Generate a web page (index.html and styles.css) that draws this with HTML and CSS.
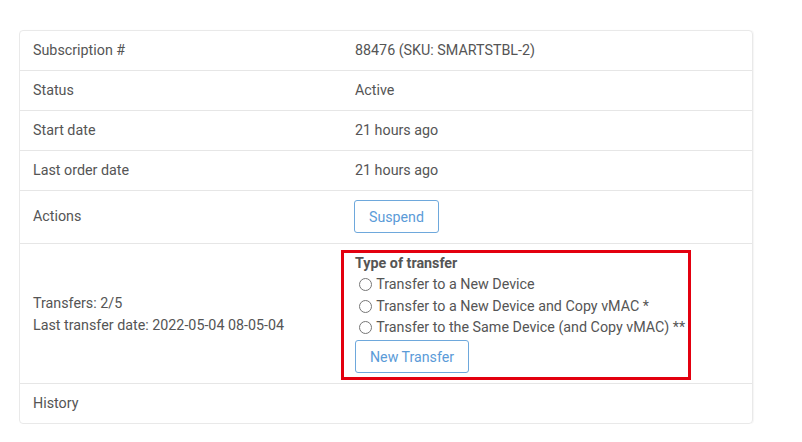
FILE: index.html
```html
<!DOCTYPE html>
<html lang="en">

<head>
    <meta charset="UTF-8">
    <meta name="viewport" content="width=device-width, initial-scale=1">
    <title>Subscription</title>
    <link rel="stylesheet" href="styles.css">
</head>

<body>
<div class="card">
    <table class="details">
        <tr>
            <td class="label">Subscription #</td>
            <td>88476 (SKU: SMARTSTBL-2)</td>
        </tr>
        <tr>
            <td class="label">Status</td>
            <td>Active</td>
        </tr>
        <tr>
            <td class="label">Start date</td>
            <td>21 hours ago</td>
        </tr>
        <tr>
            <td class="label">Last order date</td>
            <td>21 hours ago</td>
        </tr>
        <tr class="actions-row">
            <td class="label">Actions</td>
            <td><button class="btn">Suspend</button></td>
        </tr>
        <tr class="transfer-row">
            <td class="label">
                Transfers: 2/5<br>
                Last transfer date: 2022-05-04 08-05-04
            </td>
            <td>
                <!-- highlighted form -->
                <form class="transfer-form">
                    <div class="form-title">Type of transfer</div>
                    <label class="option"><input type="radio" name="type"> Transfer to a New Device</label>
                    <label class="option"><input type="radio" name="type"> Transfer to a New Device and Copy vMAC *</label>
                    <label class="option"><input type="radio" name="type"> Transfer to the Same Device (and Copy vMAC) **</label>
                    <button type="button" class="btn">New Transfer</button>
                </form>
            </td>
        </tr>
        <tr>
            <td class="label">History</td>
            <td></td>
        </tr>
    </table>
</div>
</body>

</html>
```

FILE: styles.css
```css
body {
    margin: 0;
    padding: 30px 48px 0 19px;
    background: #fff;
    font-family: Roboto, "Liberation Sans", sans-serif;
    font-size: 14.3px;
    color: #555;
}

.card {
    width: 734px;
    border: 1px solid #e9e9e9;
    border-radius: 4px;
    box-shadow: 1px 0 1px rgba(0, 0, 0, 0.04);
    box-sizing: border-box;
}

.details {
    width: 100%;
    border-collapse: collapse;
    table-layout: fixed;
}

.details td {
    padding: 10px 13px;
    line-height: 19px;
    border-top: 1px solid #e6e6e6;
    vertical-align: middle;
    text-align: left;
}

.details tr:first-child td {
    border-top: none;
}

.details td.label {
    width: 296px;
}

.actions-row td {
    padding-top: 9px;
    padding-bottom: 10px;
}

.btn {
    display: block;
    font-family: Roboto, "Liberation Sans", sans-serif;
    font-size: 14.2px;
    color: #5b9bd8;
    background: #fff;
    border: 1px solid #6ea8dc;
    border-radius: 3px;
    height: 33px;
    padding: 0 14px;
    margin-left: -1px;
    cursor: pointer;
}

.transfer-row td {
    padding-top: 6px;
    padding-bottom: 3px;
}

.transfer-row td.label {
    line-height: 22px;
    padding-top: 4px;
}

.transfer-form {
    margin: 0 48px 0 -14px;
    border: 3px solid #e3000f;
    padding: 0 11px 4px 11px;
}

.form-title {
    font-weight: bold;
    line-height: 21px;
}

.option {
    display: block;
    line-height: 21.5px;
    white-space: nowrap;
}

.option input {
    margin: 0 1px 0 4px;
    vertical-align: -2px;
}

.transfer-form .btn {
    margin-top: 1.5px;
    margin-left: 0;
}
```
